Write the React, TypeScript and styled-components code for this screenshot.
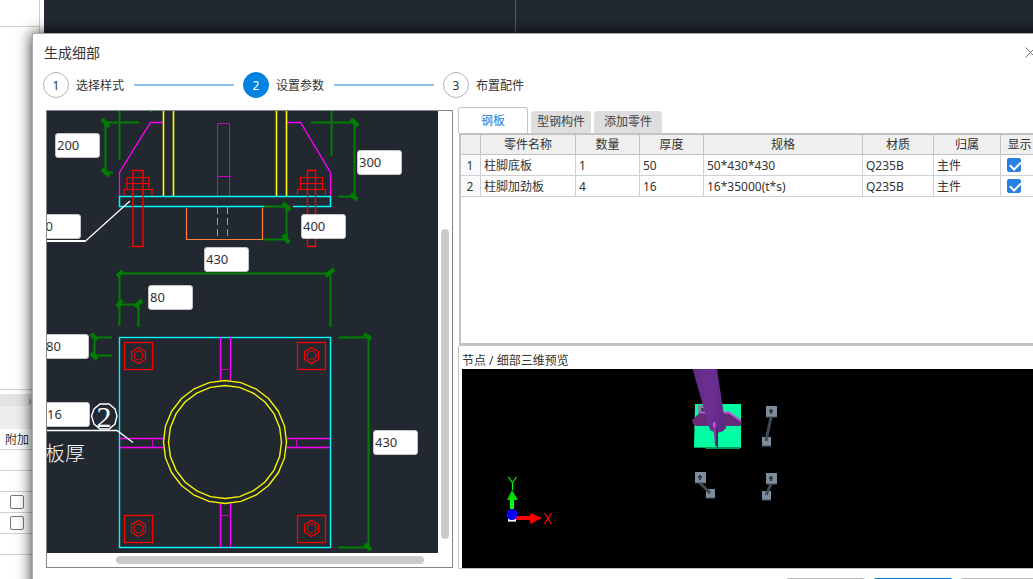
import React from "react";
import styled, { createGlobalStyle } from "styled-components";

const GlobalStyle = createGlobalStyle`
  * { box-sizing: border-box; }
  body {
    margin: 0;
    overflow: hidden;
    color: #333;
    font-family: "Noto Sans", "Noto Sans CJK SC", sans-serif;
    font-size: 12px;
  }
`;

/* ---------- application behind the dialog ---------- */

const AppShell = styled.div`
  position: relative;
  display: flex;
  height: 100vh;
  overflow: hidden;
  background: #fff;
`;

const SideColumn = styled.aside`
  flex: none;
  width: 40px;
  margin-right: 4px;
  border-right: 1px solid #ccc;
  display: flex;
  flex-direction: column;
`;

const SideBlock = styled.div<{ $h: number }>`
  flex: none;
  height: ${(p) => p.$h}px;
  border-bottom: 1px solid #d0d0d0;
`;

const SideBar = styled.div`
  flex: none;
  height: 12px;
  margin-top: 4px;
  padding-left: 28px;
  background: #e3e3e3;
  color: #888;
  display: flex;
  align-items: center;
`;

const SideHead = styled.div`
  flex: none;
  height: 23px;
  background: #eee;
`;

const SideRow = styled.div`
  flex: none;
  height: 21px;
  border-bottom: 1px solid #d0d0d0;
  display: flex;
  align-items: center;
  padding-left: 10px;
`;

const SideLabelRow = styled(SideRow)`
  padding-left: 5px;
  white-space: nowrap;
`;

const ModelView = styled.main`
  flex: 1;
  display: flex;
  background: #212830;
`;

const Crosshair = styled.div`
  width: 1px;
  margin-left: 471px;
  background: #a04040;
`;

/* ---------- dialog ---------- */

const Dialog = styled.section`
  position: absolute;
  top: 33px;
  left: 32px;
  right: -18px;
  bottom: -38px;
  display: flex;
  flex-direction: column;
  background: #fff;
  border: 1px solid #a8a8ac;
  box-shadow: 0 0 14px rgba(0, 0, 0, 0.85);
`;

const TitleBar = styled.header`
  display: flex;
  align-items: center;
  justify-content: space-between;
  height: 38px;
  padding: 0 14px 0 11px;
`;

const Title = styled.h1`
  margin: 0;
  padding-bottom: 2px;
  font-size: 14px;
  font-weight: 400;
`;

const CloseButton = styled.button`
  display: flex;
  padding: 0 0 2px;
  border: 0;
  background: none;
`;

const Steps = styled.ol`
  display: flex;
  align-items: center;
  height: 26px;
  margin: 0 0 9px;
  padding: 0 0 0 10px;
  list-style: none;
`;

const Step = styled.li`
  display: flex;
  align-items: center;
  gap: 7px;
`;

const StepNumber = styled.span<{ $active?: boolean }>`
  display: flex;
  align-items: center;
  justify-content: center;
  width: 26px;
  height: 26px;
  border-radius: 50%;
  border: 1px solid ${(p) => (p.$active ? "#0083e0" : "#b4b4b4")};
  background: ${(p) => (p.$active ? "#0083e0" : "#fff")};
  color: ${(p) => (p.$active ? "#fff" : "#333")};
`;

const StepLine = styled.li`
  width: 100px;
  height: 2px;
  margin: 0 9px 0 10px;
  background: #90c3ec;
`;

const Body = styled.div`
  flex: 1;
  min-height: 0;
  display: flex;
  gap: 5px;
  padding: 0 10px 0 13px;
`;

const Footer = styled.footer`
  display: flex;
  justify-content: flex-end;
  gap: 7px;
  padding: 9px 10px 10px;
`;

const FooterButton = styled.button<{ $primary?: boolean }>`
  width: 80px;
  height: 28px;
  border: 1px solid ${(p) => (p.$primary ? "#0083e0" : "#b4b4b4")};
  border-radius: 3px;
  background: ${(p) => (p.$primary ? "#0083e0" : "#fff")};
`;

/* ---------- section drawing ---------- */

const DrawingPanel = styled.div`
  flex: none;
  display: grid;
  grid-template: minmax(0, 1fr) 14px / 391px 14px;
  margin: 3px 0 1px;
  border: 1px solid #80848e;
`;

const Canvas = styled.div`
  position: relative;
  overflow: hidden;
  background: #212830;

  svg { display: block; }
`;

const DimInput = styled.input<{ $x: number; $y: number }>`
  position: absolute;
  left: ${(p) => p.$x}px;
  top: ${(p) => p.$y}px;
  width: 45px;
  height: 25px;
  padding: 0 1px 2px;
  border: 1px solid #c4c4c4;
  border-radius: 3px;
  background: #fff;
  color: #333;
  font: 13px "Noto Sans", sans-serif;
`;

const VTrack = styled.div`
  display: flex;
  flex-direction: column;
  padding: 0 3px;
`;

const HTrack = styled.div`
  display: flex;
  padding: 3px 0;
`;

const TrackPart = styled.div<{ $grow: number; $thumb?: boolean }>`
  flex: ${(p) => p.$grow} 1 0;
  border-radius: 4px;
  background: ${(p) => (p.$thumb ? "#cbcbcb" : "transparent")};
`;

/* ---------- parts table and preview ---------- */

const Side = styled.div`
  flex: 1;
  min-width: 0;
  display: flex;
  flex-direction: column;
`;

const Tabs = styled.div`
  display: flex;
  align-items: flex-end;
  gap: 3px;
  height: 26px;
`;

const Tab = styled.button<{ $active?: boolean }>`
  height: ${(p) => (p.$active ? 26 : 22)}px;
  padding: ${(p) => (p.$active ? "0 22px 2px" : "0 6px 2px")};
  border: ${(p) => (p.$active ? "1px solid #c4c4c8" : "0")};
  border-bottom: 0;
  border-radius: 3px 3px 0 0;
  background: ${(p) => (p.$active ? "#fff" : "#dedede")};
  color: ${(p) => (p.$active ? "#1f7be0" : "#444")};
  font: inherit;
  white-space: nowrap;

  &:last-child { padding: 0 10px 2px; }
`;

const TableFrame = styled.div`
  flex: 1;
  min-height: 0;
  margin-left: 1px;
  border: solid #c3c3c7;
  border-width: 2px 1px 3px 2px;
`;

const PartsTable = styled.table`
  width: 100%;
  table-layout: fixed;
  border-collapse: separate;
  border-spacing: 0;
`;

const Th = styled.th<{ $w?: number }>`
  width: ${(p) => (p.$w ? `${p.$w}px` : "auto")};
  height: 20px;
  padding: 0;
  border: solid #c3c3c7;
  border-width: 0 1px 1px 0;
  background: #efefef;
  font-weight: 400;
  line-height: 18px;
  white-space: nowrap;
`;

const Td = styled.td`
  height: 21px;
  padding: 2px 3px 0;
  border: solid #d0d0d4;
  border-width: 0 1px 1px 0;
  line-height: 18px;
  white-space: nowrap;
`;

const IndexTd = styled(Td)`
  padding: 2px 1px 0 0;
  text-align: center;
  background: #fafafa;
`;

const CheckTd = styled(Td)`
  padding: 0 6px;
`;

const Check = styled.input`
  appearance: none;
  display: block;
  position: relative;
  width: 14px;
  height: 14px;
  margin: 0;
  border: 1px solid #777;
  border-radius: 2px;
  background: #fff;

  &:checked {
    border-color: #2880e4;
    background: #2880e4;
  }

  &:checked::after {
    content: "";
    position: absolute;
    left: 4px;
    top: 0;
    width: 5px;
    height: 9px;
    border: solid #fff;
    border-width: 0 2px 2px 0;
    transform: rotate(45deg);
  }
`;

const PreviewFrame = styled.div`
  flex: none;
  display: flex;
  flex-direction: column;
  padding-left: 3px;
  border: solid #c3c3c7;
  border-width: 0 0 1px 1px;
`;

const PreviewTitle = styled.h2`
  margin: 0;
  padding-top: 6px;
  height: 23px;
  font-size: 12px;
  font-weight: 400;
  line-height: 18px;
`;

const Preview = styled.div`
  height: 199px;
  overflow: hidden;
  background: #000;

  svg { display: block; }
`;

/* ---------- drawings ---------- */

function Dim({ d, ticks }: { d: string; ticks: string }) {
  return (
    <g fill="none" stroke="#008000">
      <path d={d} strokeWidth="3" strokeOpacity="0.5" />
      <path d={d} strokeWidth="1" />
      <path d={ticks} strokeWidth="4" />
    </g>
  );
}

function BoltSide({ x, half }: { x: number; half: number }) {
  return (
    <g fill="none" stroke="#f00">
      <rect x={x - half} y="170.5" width={half * 2} height="76" strokeWidth="1.4" />
      <path d={`M${x - 11} 189.5V177.5H${x + 11}V189.5M${x - 11} 183.5H${x + 11}`} strokeWidth="1.2" />
      <path d={`M${x - 14} 196V189.5H${x + 14}V196`} strokeWidth="1.2" />
    </g>
  );
}

function BoltTop({ x, y }: { x: number; y: number }) {
  return (
    <g fill="none" stroke="#f00">
      <rect x={x - 14} y={y - 13} width="28" height="27" strokeWidth="1.3" />
      <path d={`M${x} ${y - 8}L${x + 7} ${y - 4}V${y + 4}L${x} ${y + 8}L${x - 7} ${y + 4}V${y - 4}Z`} strokeWidth="1.2" />
      <circle cx={x} cy={y} r="4.5" strokeWidth="1.2" />
    </g>
  );
}

function SectionDrawing() {
  return (
    <svg width="391" height="442" viewBox="47 111 391 442" aria-hidden="true">
      <Dim d="M105.5 122.5V173M105 122.5H139M119.5 111V160M105 172.5H113" ticks="M102 119L109 127M102 169L109 176" />
      <Dim d="M331.5 111V156M311 122.5H354.5V196.5M338 196.5H355" ticks="M351 119L358 126M351 194L357 200" />
      <path d="M149.5 111.5H152" stroke="#008000" />
      <path d="M217.5 207V239M227.5 207V239" fill="none" stroke="#ff7f3f" strokeDasharray="7 4" />
      <path d="M186.5 208V239.5H262.5V208" fill="none" stroke="#ff7f3f" strokeWidth="1.2" />
      <g fill="none" stroke="#ff00ff" strokeWidth="1.3">
        <path d="M164 122.5H150.5L119.5 172.5V196M287 122.5H300.5L330.5 172.5V196" />
        <path d="M217.5 196V123.5H229.5V196M217 176.5H231" stroke="#c800c8" strokeWidth="1" />
      </g>
      <path d="M163.5 111V196M173.5 111V196M276.5 111V196M286.5 111V196" stroke="#ff0" strokeWidth="1.6" />
      <path d="M264 206.5H119.5V196.5H330.5V206.5H293" fill="none" stroke="#00ffff" strokeWidth="1.5" />
      <Dim d="M264 206.5H286.5V239.5H263" ticks="M283 203L290 210M283 235L289 243" />
      <BoltSide x={138} half={5} />
      <BoltSide x={311.5} half={4} />
      <path d="M47 241H85" stroke="#fff" strokeWidth="2" />
      <path d="M85 241.5L130 201" stroke="#fff" strokeWidth="1.2" />

      <Dim d="M119.5 326V273.5H330.5V327M119.5 304.5H138.5V327" ticks="M117 276L123 271M326 276L334 269M117 307L122 300M135 307L142 300" />
      <Dim d="M112 337.5H94.5V355.5H112" ticks="M91 334L97 340M91 353L97 359" />
      <Dim d="M338 337.5H368.5V547.5H338" ticks="M364 334L371 339M365 544L371 550" />
      <rect x="119.5" y="337.5" width="211" height="210" fill="none" stroke="#00ffff" strokeWidth="1.4" />
      <g fill="none" stroke="#ff00ff" strokeWidth="1.3">
        <path d="M220.5 337V380M230.5 337V380M220.5 504V547M230.5 504V547" />
        <path d="M120 438.5H163M120 447.5H163M287 438.5H330M287 447.5H330" />
        <path d="M220 369.5H231M220 515.5H231M152.5 438V448M296.5 438V448" stroke="#c800c8" strokeWidth="1" />
      </g>
      <g fill="none" stroke="#f5f500" strokeWidth="1.4">
        <path d="M225 380.5L240.9 382.6L255.8 388.8L268.5 398.5L278.3 411.2L284.5 426.1L286.5 442L284.5 457.9L278.3 472.8L268.5 485.5L255.8 495.2L240.9 501.4L225 503.5L209.1 501.4L194.2 495.2L181.5 485.5L171.7 472.8L165.5 457.9L163.5 442L165.5 426.1L171.7 411.2L181.5 398.5L194.2 388.8L209.1 382.6Z" />
        <path d="M225 385.5L239.6 387.4L253.2 393.1L265 402L273.9 413.7L279.6 427.4L281.5 442L279.6 456.6L273.9 470.3L265 482L253.2 490.9L239.6 496.6L225 498.5L210.4 496.6L196.8 490.9L185 482L176.1 470.3L170.4 456.6L168.5 442L170.4 427.4L176.1 413.7L185 402L196.8 393.1L210.4 387.4Z" />
      </g>
      <BoltTop x={138.5} y={355.5} />
      <BoltTop x={311.5} y={355.5} />
      <BoltTop x={138.5} y={528.5} />
      <BoltTop x={311.5} y={528.5} />
      <path d="M100 404H109L115 409L117 416L115 424L109 429H100L94 424L91.5 416L94 409Z" fill="none" stroke="#fff" strokeWidth="1.4" />
      <path d="M47 430.5H117L133 442.5" fill="none" stroke="#fff" strokeWidth="1.3" />
      <text x="104" y="427" textAnchor="middle" fill="#fff" fontFamily="Liberation Serif, serif" fontSize="30">2</text>
      <text x="45" y="461" fill="#fff" fontFamily="Noto Sans CJK SC, sans-serif" fontSize="20" fontWeight="300">板厚</text>
    </svg>
  );
}

function Anchor({ top, foot }: { top: [number, number]; foot: [number, number] }) {
  return (
    <g>
      <rect x={top[0] - 5} y={top[1] - 5} width="11" height="11" fill="#7d8c9c" />
      <rect x={foot[0] - 4} y={foot[1] - 4} width="9" height="9" fill="#7d8c9c" />
      <path d={`M${top[0]} ${top[1] + 6}L${foot[0]} ${foot[1]}`} stroke="#414a52" strokeWidth="3" />
      <path d={`M${top[0] - 2} ${top[1]}h4M${top[0]} ${top[1] - 2}v5`} stroke="#343c44" strokeWidth="2" />
      <path d={`M${top[0] - 5} ${top[1] + 6}h11M${foot[0] - 4} ${foot[1] + 5}h9`} stroke="#4d5863" />
    </g>
  );
}

function NodePreview() {
  return (
    <svg width="571" height="199" viewBox="462 369 571 199" aria-hidden="true">
      <defs>
        <linearGradient id="tube" x1="0" x2="1" y1="0" y2="0">
          <stop offset="0" stopColor="#5f2984" />
          <stop offset="0.5" stopColor="#6c3093" />
          <stop offset="1" stopColor="#5d2882" />
        </linearGradient>
      </defs>
      <path d="M695 404H741V448H694Z" fill="#00ffa2" />
      <path d="M694 447H740V449H706V448H694Z" fill="#009960" />
      <rect x="698" y="405" width="9" height="8" fill="#7d8c9c" />
      <rect x="701" y="408" width="4" height="4" fill="#414a52" />
      <path d="M700 412.5L692 420L693 424L696 426H740L741.5 424V420L729 412.5Z" fill="#672b77" />
      <path d="M700 412.5H706M724 412.5H729L741 421" fill="none" stroke="#c552df" strokeWidth="2" />
      <path d="M692.5 369H717L726 428Q720 436 710 430Z" fill="url(#tube)" />
      <path d="M713 422H716L718 447L715 446Z" fill="#8f35a1" />
      <path d="M716 427L718 430V448L716 445Z" fill="#501e61" />
      <rect x="713" y="422" width="2" height="5" fill="#c552df" />
      <Anchor top={[771, 411]} foot={[766, 441]} />
      <Anchor top={[700, 477]} foot={[710, 493]} />
      <Anchor top={[771, 478]} foot={[766, 495]} />
      <rect x="508" y="517" width="8" height="4" fill="#f4f4f4" />
      <path d="M508 521.5H516" stroke="#999" />
      <path d="M516 518H531" stroke="#f00" strokeWidth="4" />
      <path d="M530 513L542 518L530 524Z" fill="#f00" />
      <path d="M512 509V500" stroke="#0f0" strokeWidth="4" />
      <path d="M507 500L512 490L518 500Z" fill="#00d800" />
      <circle cx="512" cy="514.5" r="5.5" fill="#0000f8" />
      <path d="M508.5 477L512.5 483L516.5 477M512.5 483V490" fill="none" stroke="#0f0" strokeWidth="1.2" />
      <path d="M544.5 513L551.5 524M551.5 513L544.5 524" stroke="#f00" strokeWidth="1.3" />
    </svg>
  );
}

/* ---------- data ---------- */

const dims = [
  { label: "肋板高度", value: "200", x: 8, y: 22 },
  { label: "柱脚高度", value: "300", x: 310, y: 39 },
  { label: "锚栓长度", value: "400", x: 254, y: 103 },
  { label: "底板厚度", value: "50", x: -11, y: 103 },
  { label: "底板宽度", value: "430", x: 157, y: 136 },
  { label: "水平边距", value: "80", x: 101, y: 174 },
  { label: "竖向边距", value: "80", x: -3, y: 223 },
  { label: "加劲板厚", value: "16", x: -2, y: 291 },
  { label: "底板长度", value: "430", x: 326, y: 319 },
];

const columns: { title: string; width?: number }[] = [
  { title: "", width: 20 },
  { title: "零件名称", width: 95 },
  { title: "数量", width: 64 },
  { title: "厚度", width: 64 },
  { title: "规格" },
  { title: "材质", width: 71 },
  { title: "归属", width: 67 },
  { title: "显示", width: 38 },
];

const parts = [
  ["柱脚底板", "1", "50", "50*430*430", "Q235B", "主件"],
  ["柱脚加劲板", "4", "16", "16*35000(t*s)", "Q235B", "主件"],
];

export default function App() {
  return (
    <>
      <GlobalStyle />
      <AppShell>
        <SideColumn>
          <SideBlock $h={27} />
          <SideBlock $h={363} />
          <SideBar>›</SideBar>
          <SideHead />
          <SideLabelRow>附加</SideLabelRow>
          <SideRow />
          <SideRow />
          <SideRow><Check type="checkbox" aria-label="附加 1" /></SideRow>
          <SideRow><Check type="checkbox" aria-label="附加 2" /></SideRow>
          <SideRow />
        </SideColumn>
        <ModelView><Crosshair /></ModelView>

        <Dialog role="dialog" aria-labelledby="dialog-title">
          <TitleBar>
            <Title id="dialog-title">生成细部</Title>
            <CloseButton type="button" aria-label="关闭">
              <svg width="11" height="11" viewBox="0 0 11 11" fill="none" stroke="#777">
                <path d="M.5.5l10 10M10.5.5l-10 10" />
              </svg>
            </CloseButton>
          </TitleBar>
          <Steps>
            <Step><StepNumber>1</StepNumber>选择样式</Step>
            <StepLine aria-hidden="true" />
            <Step aria-current="step"><StepNumber $active>2</StepNumber>设置参数</Step>
            <StepLine aria-hidden="true" />
            <Step><StepNumber>3</StepNumber>布置配件</Step>
          </Steps>
          <Body>
            <DrawingPanel>
              <Canvas>
                <SectionDrawing />
                {dims.map((d) => (
                  <DimInput key={d.label} aria-label={d.label} defaultValue={d.value} $x={d.x} $y={d.y} />
                ))}
              </Canvas>
              <VTrack>
                <TrackPart $grow={118} />
                <TrackPart $grow={310} $thumb />
                <TrackPart $grow={14} />
              </VTrack>
              <HTrack>
                <TrackPart $grow={69} />
                <TrackPart $grow={308} $thumb />
                <TrackPart $grow={14} />
              </HTrack>
            </DrawingPanel>
            <Side>
              <Tabs role="tablist">
                <Tab type="button" role="tab" aria-selected="true" $active>钢板</Tab>
                <Tab type="button" role="tab" aria-selected="false">型钢构件</Tab>
                <Tab type="button" role="tab" aria-selected="false">添加零件</Tab>
              </Tabs>
              <TableFrame>
                <PartsTable>
                  <thead>
                    <tr>
                      {columns.map((c, i) => (
                        <Th key={i} $w={c.width}>{c.title}</Th>
                      ))}
                    </tr>
                  </thead>
                  <tbody>
                    {parts.map((row, i) => (
                      <tr key={row[0]}>
                        <IndexTd>{i + 1}</IndexTd>
                        {row.map((cell, j) => <Td key={j}>{cell}</Td>)}
                        <CheckTd><Check type="checkbox" defaultChecked aria-label={`显示 ${row[0]}`} /></CheckTd>
                      </tr>
                    ))}
                  </tbody>
                </PartsTable>
              </TableFrame>
              <PreviewFrame>
                <PreviewTitle>节点 / 细部三维预览</PreviewTitle>
                <Preview><NodePreview /></Preview>
              </PreviewFrame>
            </Side>
          </Body>
          <Footer>
            <FooterButton type="button" aria-label="上一步" />
            <FooterButton type="button" aria-label="下一步" $primary />
            <FooterButton type="button" aria-label="取消" />
          </Footer>
        </Dialog>
      </AppShell>
    </>
  );
}
